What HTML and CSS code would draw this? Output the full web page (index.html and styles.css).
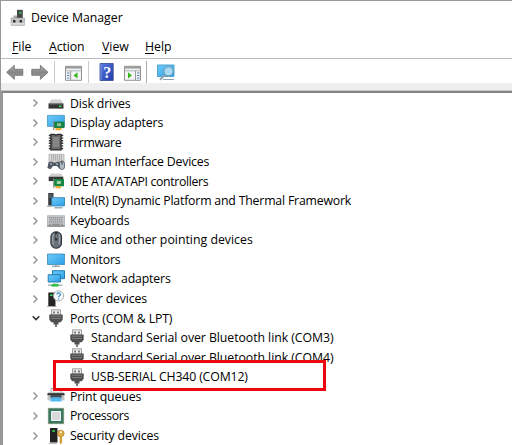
FILE: index.html
```html
<!DOCTYPE html>
<html lang="en">
<head>
<meta charset="utf-8">
<title>Device Manager</title>
<link rel="stylesheet" href="styles.css">
</head>
<body>
<svg class="defs" aria-hidden="true">
  <defs>
    <linearGradient id="blue" x1="0" y1="0" x2="1" y2="1"><stop offset="0" stop-color="#6fcbf8"/><stop offset="1" stop-color="#2b9fe8"/></linearGradient>
    <linearGradient id="grey" x1="0" y1="0" x2="0" y2="1"><stop offset="0" stop-color="#b4b4b4"/><stop offset=".5" stop-color="#868686"/><stop offset="1" stop-color="#a2a2a2"/></linearGradient>
    <linearGradient id="help" x1="0" y1="0" x2="1" y2="1"><stop offset="0" stop-color="#5b7be0"/><stop offset="1" stop-color="#1d3cab"/></linearGradient>
    <symbol id="chev" viewBox="0 0 8 10"><path d="M1.5 1.5 5 5 1.5 8.5" fill="none" stroke="#999" stroke-width="1.5"/></symbol>
    <symbol id="chev-open" viewBox="0 0 8 10"><path d="M.7 3.2 4 6.5 7.3 3.2" fill="none" stroke="#333" stroke-width="1.6"/></symbol>
    <symbol id="plug" viewBox="0 0 18 18">
      <path d="M4.5.8h9V6h-9z" fill="#eee" stroke="#888" stroke-width=".8"/><path d="M6.3 2.5h1.5v2H6.3zM10.2 2.5h1.5v2h-1.5z" fill="#555"/>
      <path d="M2.3 5.5h13.4v5.2l-2 2.5h-2.2v2.3h-5v-2.3H4.3l-2-2.5z" fill="#505050"/><path d="M4 7.2h10M4 9.5h10" stroke="#7c7c7c"/><path d="M9 15v3" stroke="#777" stroke-width="2"/>
    </symbol>
    <symbol id="disk" viewBox="0 0 18 18"><path d="M4.3 5.5h9.5l2.8 4.3H1.4z" fill="#d0d0d0"/><path d="M1.5 9.5h15v5.1h-15z" fill="#343434"/><path d="M2 9.9h14" stroke="#777"/><path d="M12 11.5h2.5v1.5H12z" fill="#3be35b"/></symbol>
    <symbol id="display" viewBox="0 0 18 18"><path d="M.4 1.4h17v11H.4z" fill="url(#blue)" stroke="#3989b7" stroke-width=".7"/><path d="M7 7.6h10.5v6.5H7z" fill="#168344"/><path d="M10 9.2h4v3h-4z" fill="#8fbd9d"/><path d="M6.7 7v9" stroke="#888"/><path d="M8.5 14.2h6v2h-6z" fill="#f5a31c"/></symbol>
    <symbol id="chip" viewBox="0 0 18 18"><path d="M1.8 2.5h14.4M1.8 5.1h14.4M1.8 7.7h14.4M1.8 10.3h14.4M1.8 12.9h14.4M1.8 15.5h14.4" stroke="#333" stroke-width="1.4"/><path d="M3.9 1.3h3.4l1.7 1 1.7-1h3.4v15.5H3.9z" fill="#6c6c6c" stroke="#2a2a2a" stroke-width="1.2"/><path d="M6 4h6v10H6z" fill="#858585"/></symbol>
    <symbol id="hid" viewBox="0 0 18 18"><path d="M2 1.3h15v9H2z" fill="#dadada" stroke="#a5a5a5" stroke-width=".7"/><path d="M4 3h11M4 5h11M4 7h11" stroke="#888" stroke-dasharray="1.2 .8"/><path d="M1.5 9.5q3-2 5 0h2q3-2 5 0l1.3 5-2 1.5-3-3H6l-2.5 3.2L.4 15z" fill="#4e5964"/><circle cx="4" cy="11" r="1" fill="#a5afb9"/><circle cx="10" cy="11" r="1" fill="#a5afb9"/><rect x="12.5" y="8" width="5" height="8.5" rx="2.4" fill="#aeb9c3" stroke="#525b65" stroke-width=".8"/><path d="M15 8v3.5" stroke="#333"/></symbol>
    <symbol id="ide" viewBox="0 0 18 18"><path d="M4 1.5h10l2.3 3.3H1.7z" fill="#cfcfcf"/><path d="M1.7 4.7h14.6v4.4H1.7z" fill="#363636"/><path d="M7 7h10v7.3H7z" fill="#148843"/><path d="M9.8 9h4v3h-4z" fill="#a5d0b0"/><path d="M6.7 6.5v9.5" stroke="#888"/><path d="M8.5 14.3h5.5v2H8.5z" fill="#f3a426"/></symbol>
    <symbol id="tower" viewBox="0 0 18 18"><path d="M1.2 1h5.3v12.6H1.2z" fill="#343b40"/><path d="M2 3h3.5M2 5h3.5" stroke="#8a9297" stroke-width=".7"/><path d="M4.7 5.7h12.8v8.2H4.7z" fill="url(#blue)" stroke="#277cb2" stroke-width=".8"/><path d="M0 14.3h4.5" stroke="#aaa" stroke-width="1.3"/><path d="M7.5 15.8h8" stroke="#7d99aa" stroke-width="1.2"/></symbol>
    <symbol id="keyboard" viewBox="0 0 18 18"><path d="M.5 3.7h17v10.6H.5z" fill="#c8cbcd" stroke="#a2a5a8" stroke-width=".7"/><path d="M2 5.8h14M2.5 7.9h13M2 10h14" stroke="#747474" stroke-width="1" stroke-dasharray="1.3 .6"/><path d="M2 12.2h2M5 12.2h8M14 12.2h2" stroke="#777"/><path d="M.4 14h17.2" stroke="#666"/></symbol>
    <symbol id="mouse" viewBox="0 0 18 18"><rect x="3.9" y=".8" width="10.6" height="16.4" rx="5" fill="#69727b" stroke="#30373e" stroke-width="1.1"/><path d="M6.3 3q-1.4 5 0 10.5M12 3q1.4 5 0 10.5" stroke="#a3afb8" fill="none"/><path d="M9.2 1v8.5" stroke="#25292d" stroke-width="2.2"/><path d="M9.2 3v4.3" stroke="#9caab3"/></symbol>
    <symbol id="monitor" viewBox="0 0 18 18"><path d="M.5 3h17v10.5H.5z" fill="url(#blue)" stroke="#3989b7" stroke-width=".8"/><path d="M8 13.8h2v1.2H8z" fill="#aaa"/><path d="M5 15.3h8" stroke="#8298a5" stroke-width="1.1"/></symbol>
    <symbol id="network" viewBox="0 0 18 18"><path d="M5.5.7h12v8h-12z" fill="url(#blue)" stroke="#247eb4"/><path d="M1.2 4.7h12.2V12H1.2z" fill="url(#blue)" stroke="#247eb4"/><path d="M7.5 12.5v3M1 15.3h14.5" stroke="#aab7ad" stroke-width="1.5"/><path d="M4.5 15.3h7" stroke="#2fc34b" stroke-width="2.6"/></symbol>
    <symbol id="other" viewBox="0 0 18 18"><path d="M1.3 2.5h7.2v14H1.3z" fill="#252525"/><path d="M3 5.2h2.6" stroke="#3ae35c" stroke-width="1.5"/><path d="M0 16.5h9.5" stroke="#aaa"/><circle cx="11.6" cy="5.9" r="5.1" fill="#f7fbfd" stroke="#a7b0b5"/><path d="M9.9 4.6q0-1.8 1.7-1.8 1.8 0 1.8 1.6 0 1-1.1 1.6-.7.4-.7 1.3" fill="none" stroke="#3888be" stroke-width="1.2"/><circle cx="11.6" cy="9" r=".7" fill="#3888be"/></symbol>
    <symbol id="printer" viewBox="0 0 18 18"><path d="M4 1.5h10v4H4z" fill="#eee" stroke="#999" stroke-width=".8"/><path d="M1.5 5h15l1 2.5v6H.5v-6z" fill="#c4c7c9"/><path d="M.5 6.2h17v2H.5z" fill="#333"/><path d="M3.5 8h11v3.2h-11z" fill="#4a4d50"/><path d="M4.3 10.3h9.4l1 4.2H3.3z" fill="#55b9ee"/></symbol>
    <symbol id="cpu" viewBox="0 0 18 18"><path d="M1.3 1.3h15.4v15.4H1.3z" fill="#397663" stroke="#7a8d65" stroke-dasharray="1 .8"/><path d="M4.5 4.5h9v9h-9z" fill="#d8d8d8" stroke="#f4f4f4"/></symbol>
    <symbol id="security" viewBox="0 0 18 18"><path d="M3 1h7.5v14.5H3z" fill="#222"/><path d="M5.3 4h2.6" stroke="#2ddd50" stroke-width="1.7"/><path d="M1.8 16.3h8" stroke="#aaa"/><circle cx="13.8" cy="6.5" r="3.3" fill="#dfaf49" stroke="#ac7b24" stroke-width=".7"/><circle cx="13.8" cy="5.2" r=".9" fill="#fff"/><path d="M12.7 9H15v6.5l-1.2 1.7-1.1-1.2z" fill="#d29d35"/></symbol>
  </defs>
</svg>
<div class="window">
  <header class="title">
    <svg class="app-icon" viewBox="0 0 16 18"><path d="M7 .8h5.8V10H7z" fill="#454a49"/><path d="M9.2 2.8h2.2v2H9.2z" fill="#39be57"/><path d="M3.5 6.5H7v3H3.5z" fill="#aaa"/><path d="M1 9h13.5v7.3H1z" fill="#c4c4c4" stroke="#999" stroke-width=".6"/><path d="M3 11h2.5v2.5H3zM9.6 11h2.5v2.5H9.6z" fill="#333"/><path d="M1 14.9h13.5" stroke="#eee"/></svg>
    <span class="title-text">Device Manager</span>
  </header>
  <nav class="menu"><span class="m-file"><u>F</u>ile</span><span class="m-action"><u>A</u>ction</span><span class="m-view"><u>V</u>iew</span><span class="m-help"><u>H</u>elp</span></nav>
  <div class="toolbar">
    <svg class="tools" viewBox="0 0 180 24">
      <g fill="url(#grey)" stroke="#747474" stroke-width=".9"><path d="m6.7 13.3 7.6-7v4h8.5v6h-8.5v4z"/><path d="m48 13.3-7.6-7v4h-8.6v6h8.6v4z"/></g>
      <path d="M54.5 2v22M88.5 2v22" stroke="#ccc"/><path d="M146.5 2v22" stroke="#aaa"/>
      <path d="M65.5 7.3h16v14h-16z" fill="#f5f5f5" stroke="#929292"/><path d="M65.5 8.5h16" stroke="#9c9c9c" stroke-width="2.2"/><path d="M66 11.8h15" stroke="#a9b5bc"/><path d="M70.7 12v9" stroke="#999"/><path d="M67 14h2.5M67 16.5h2.5M67 19h2.5" stroke="#4f86b5"/>
      <path d="M77.5 13.3v6.2l-4-3.1z" fill="#36b51d"/>
      <path d="M100 4.5h13.2v17H100z" fill="url(#help)" stroke="#32458c" stroke-width=".8"/>
      <path d="M101 4.8v16.4" stroke="#7d93dc"/>
      <text class="question" x="103.3" y="18.5">?</text>
      <path d="M124.5 7.3h16v14h-16z" fill="#f5f5f5" stroke="#929292"/><path d="M124.5 8.5h16" stroke="#9c9c9c" stroke-width="2.2"/><path d="M125 11.8h15" stroke="#a9b5bc"/><path d="M135.5 12v9" stroke="#999"/><path d="M137 14h2.5M137 16.5h2.5M137 19h2.5" stroke="#4f86b5"/><path d="M128 13.3v6.2l4-3.1z" fill="#36b51d"/>
      <path d="M157.5 6H174v11.5h-16.5z" fill="url(#blue)" stroke="#54a5ce"/><path d="M163 20.5h11" stroke="#8ea6b3"/><circle cx="168.5" cy="12.3" r="4.5" fill="#a9dbf4" stroke="#7798ad"/><path d="m165.2 15.6-5.2 5.2" stroke="#8d9fab" stroke-width="2"/>
    </svg>
  </div>
  <main class="tree">
    <div class="row"><svg class="arrow"><use href="#chev"/></svg><svg class="icon"><use href="#disk"/></svg><span>Disk drives</span></div>
    <div class="row"><svg class="arrow"><use href="#chev"/></svg><svg class="icon"><use href="#display"/></svg><span>Display adapters</span></div>
    <div class="row"><svg class="arrow"><use href="#chev"/></svg><svg class="icon"><use href="#chip"/></svg><span class="condensed">Firmware</span></div>
    <div class="row"><svg class="arrow"><use href="#chev"/></svg><svg class="icon"><use href="#hid"/></svg><span class="snug">Human Interface Devices</span></div>
    <div class="row"><svg class="arrow"><use href="#chev"/></svg><svg class="icon"><use href="#ide"/></svg><span class="condensed">IDE ATA/ATAPI controllers</span></div>
    <div class="row"><svg class="arrow"><use href="#chev"/></svg><svg class="icon"><use href="#tower"/></svg><span class="snug">Intel(R) Dynamic Platform and Thermal Framework</span></div>
    <div class="row"><svg class="arrow"><use href="#chev"/></svg><svg class="icon"><use href="#keyboard"/></svg><span>Keyboards</span></div>
    <div class="row"><svg class="arrow"><use href="#chev"/></svg><svg class="icon"><use href="#mouse"/></svg><span class="wide">Mice and other pointing devices</span></div>
    <div class="row"><svg class="arrow"><use href="#chev"/></svg><svg class="icon"><use href="#monitor"/></svg><span>Monitors</span></div>
    <div class="row"><svg class="arrow"><use href="#chev"/></svg><svg class="icon"><use href="#network"/></svg><span>Network adapters</span></div>
    <div class="row"><svg class="arrow"><use href="#chev"/></svg><svg class="icon"><use href="#other"/></svg><span>Other devices</span></div>
    <div class="row"><svg class="arrow"><use href="#chev-open"/></svg><svg class="icon"><use href="#plug"/></svg><span>Ports (COM &amp; LPT)</span></div>
    <div class="row child"><svg class="icon"><use href="#plug"/></svg><span class="loose">Standard Serial over Bluetooth link (COM3)</span></div>
    <div class="row child"><svg class="icon"><use href="#plug"/></svg><span class="loose">Standard Serial over Bluetooth link (COM4)</span></div>
    <div class="row child marked"><svg class="icon"><use href="#plug"/></svg><span>USB-SERIAL CH340 (COM12)</span></div>
    <div class="row"><svg class="arrow"><use href="#chev"/></svg><svg class="icon"><use href="#printer"/></svg><span>Print queues</span></div>
    <div class="row"><svg class="arrow"><use href="#chev"/></svg><svg class="icon"><use href="#cpu"/></svg><span class="condensed">Processors</span></div>
    <div class="row"><svg class="arrow"><use href="#chev"/></svg><svg class="icon"><use href="#security"/></svg><span>Security devices</span></div>
  </main>
</div>
</body>
</html>
```
FILE: styles.css
```css
*, *::before { box-sizing: border-box; }
body { margin: 0; overflow: hidden; background: #fff; color: #000; font: 12.3px/19.55px "Open Sans", "Noto Sans", sans-serif; }
.defs { position: absolute; width: 0; height: 0; }
.window { height: 445px; display: flex; flex-direction: column; border-top: 1px solid #999; border-left: 1px solid #999; }
.title { height: 34px; display: flex; align-items: center; padding-left: 9px; gap: 5px; }
.app-icon { width: 16px; height: 18px; }
.title-text { letter-spacing: -.02px; }
.menu { height: 23px; display: flex; align-items: center; padding: 1px 0 0 11px; }
.menu u { text-underline-offset: 2px; }
.m-file { width: 37px; }
.m-action { width: 53px; letter-spacing: -.1px; }
.m-view { width: 43px; }
.toolbar { height: 25px; border-top: 1px solid #bbb; }
.tools { display: block; width: 180px; height: 24px; margin-left: -1px; }
.question { font: bold 16px "Liberation Serif", serif; fill: #fff; }
.tree { flex: 1; min-height: 0; overflow: hidden; margin-top: 8px; border-top: 2px solid #858585; border-left: 2px solid #999; padding-top: .5px; box-shadow: 0 -1px 0 #c8c8c8, 0 -8px 0 #eee; }
.row { height: 19.55px; display: flex; align-items: center; padding-left: 29px; white-space: nowrap; letter-spacing: -.15px; }
.snug { letter-spacing: -.19px; }
.condensed { letter-spacing: -.36px; }
.wide { letter-spacing: .01px; }
.loose { letter-spacing: -.06px; }
.arrow { width: 8px; height: 10px; margin-right: 7px; flex: none; }
.icon { width: 18px; height: 18px; margin-right: 5px; flex: none; }
.child { padding-left: 65px; }
.marked { position: relative; }
.marked::before { content: ""; position: absolute; left: 50px; top: -7px; width: 273px; height: 31px; border: 3px solid #ec0610; background: #fff; }
.marked > * { position: relative; }
```
